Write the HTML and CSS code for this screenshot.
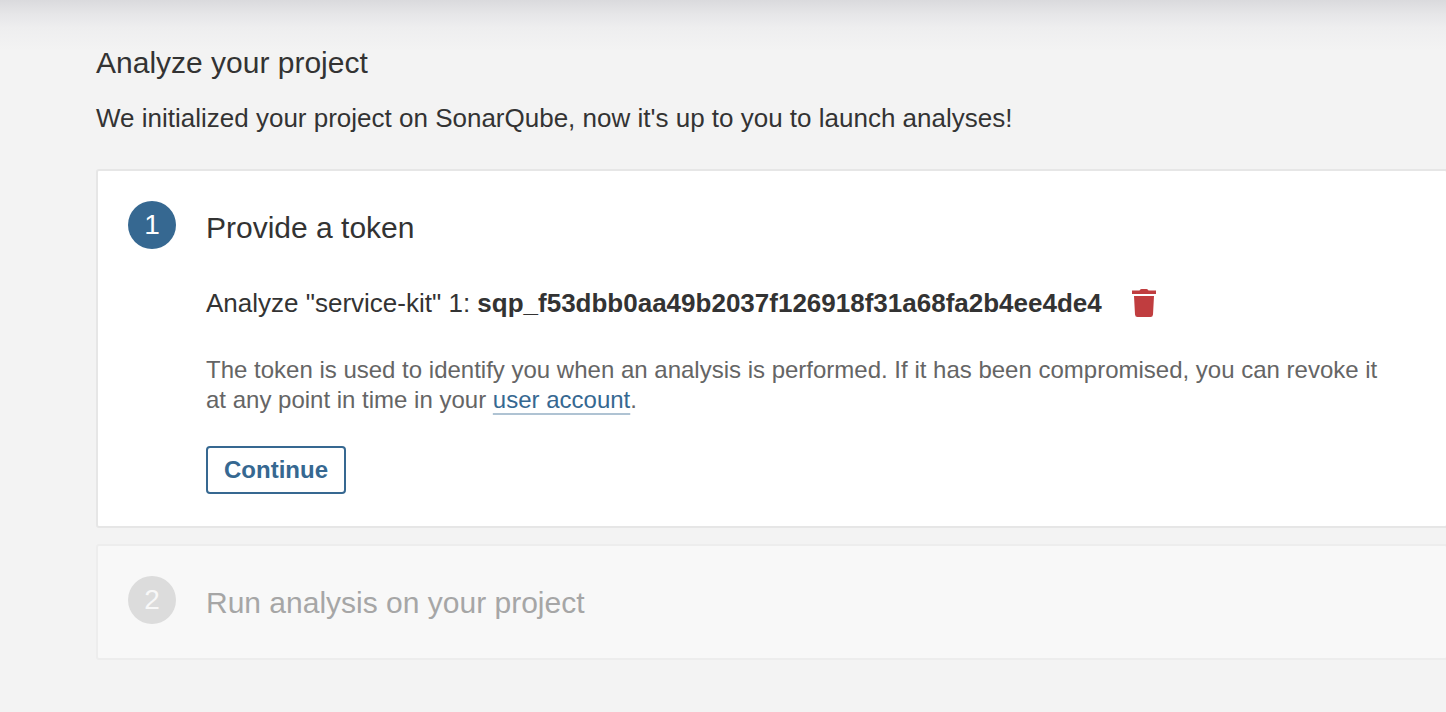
FILE: index.html
```html
<!DOCTYPE html>
<html lang="en">
<head>
<meta charset="utf-8">
<title>Analyze your project</title>
<link rel="stylesheet" href="styles.css">
</head>
<body>
<main class="page">
  <header class="page-header">
    <h1 class="page-title">Analyze your project</h1>
    <p class="page-description">We initialized your project on SonarQube, now it's up to you to launch analyses!</p>
  </header>
  <section class="step">
    <div class="step-number">1</div>
    <div class="step-body">
      <h2 class="step-title">Provide a token</h2>
      <div class="token">
        <span>Analyze "service-kit" 1: <strong class="token-value">sqp_f53dbb0aa49b2037f126918f31a68fa2b4ee4de4</strong></span>
        <button class="delete" type="button" aria-label="Delete token">
          <svg width="24" height="28" viewBox="0 0 24 28"><path fill="#c03d3f" d="M0 1.500h7.500Q8 0 9.500 0h5Q16 0 16.500 1.500H24V5H0zM2 7h20l-1 18.500q-.2 2.500-2.500 2.500h-13Q3.200 28 3 25.500z"/></svg>
        </button>
      </div>
      <p class="note">The token is used to identify you when an analysis is performed. If it has been compromised, you can revoke it at any point in time in your <a class="link" href="#">user account</a>.</p>
      <button class="continue" type="button">Continue</button>
    </div>
  </section>
  <section class="step step-inactive">
    <div class="step-number">2</div>
    <div class="step-body">
      <h2 class="step-title">Run analysis on your project</h2>
    </div>
  </section>
</main>
</body>
</html>
```
FILE: styles.css
```css
* { box-sizing: border-box; }
body {
  margin: 0;
  min-height: 100vh;
  background: linear-gradient(#dadadd, #e6e6e8 14px, #eeeeef 28px, #f3f3f3 50px) #f3f3f3 no-repeat;
  color: #333;
  font-family: "Helvetica Neue", "Liberation Sans", Arial, sans-serif;
  font-size: 26px;
  line-height: 32px;
}
h1, h2, p { margin: 0; font-weight: 400; }
.page { padding: 44px 0 0 96px; overflow: hidden; }
.page-header { margin-bottom: 35px; }
.page-title { font-size: 30px; line-height: 38px; margin-bottom: 20px; }
.step {
  display: flex;
  gap: 30px;
  margin: 0 -2px 16px 0;
  padding: 30px 56px 32px 30px;
  border: 2px solid #e6e6e6;
  border-radius: 3px;
  background: #fff;
}
.step-number {
  flex: none;
  width: 48px;
  height: 48px;
  border-radius: 50%;
  background: #366891;
  color: #fff;
  font-size: 28px;
  line-height: 48px;
  text-align: center;
}
.step-body { flex: 1; padding-top: 8px; }
.step-title { font-size: 30px; line-height: 38px; }
.token { display: flex; align-items: center; gap: 30px; margin: 40px 0 36px; }
.token-value { font-weight: 700; }
.delete { display: flex; padding: 0; border: 0; background: none; }
.note { margin-bottom: 31px; color: #656565; font-size: 24px; line-height: 30px; }
.link {
  color: #366891;
  text-decoration: underline 2px #afc3d3;
  text-decoration-skip-ink: none;
  text-underline-offset: 5px;
}
.continue {
  display: block;
  height: 48px;
  padding: 0 16px;
  border: 2px solid #366891;
  border-radius: 4px;
  background: #fff;
  color: #366891;
  font: 700 24px/44px "Helvetica Neue", "Liberation Sans", Arial, sans-serif;
}
.step-inactive { padding-bottom: 34px; border-color: #ededed; background: #f8f8f8; color: #a6a6a6; }
.step-inactive .step-number { background: #dcdcdc; color: #f8f8f8; }
```
